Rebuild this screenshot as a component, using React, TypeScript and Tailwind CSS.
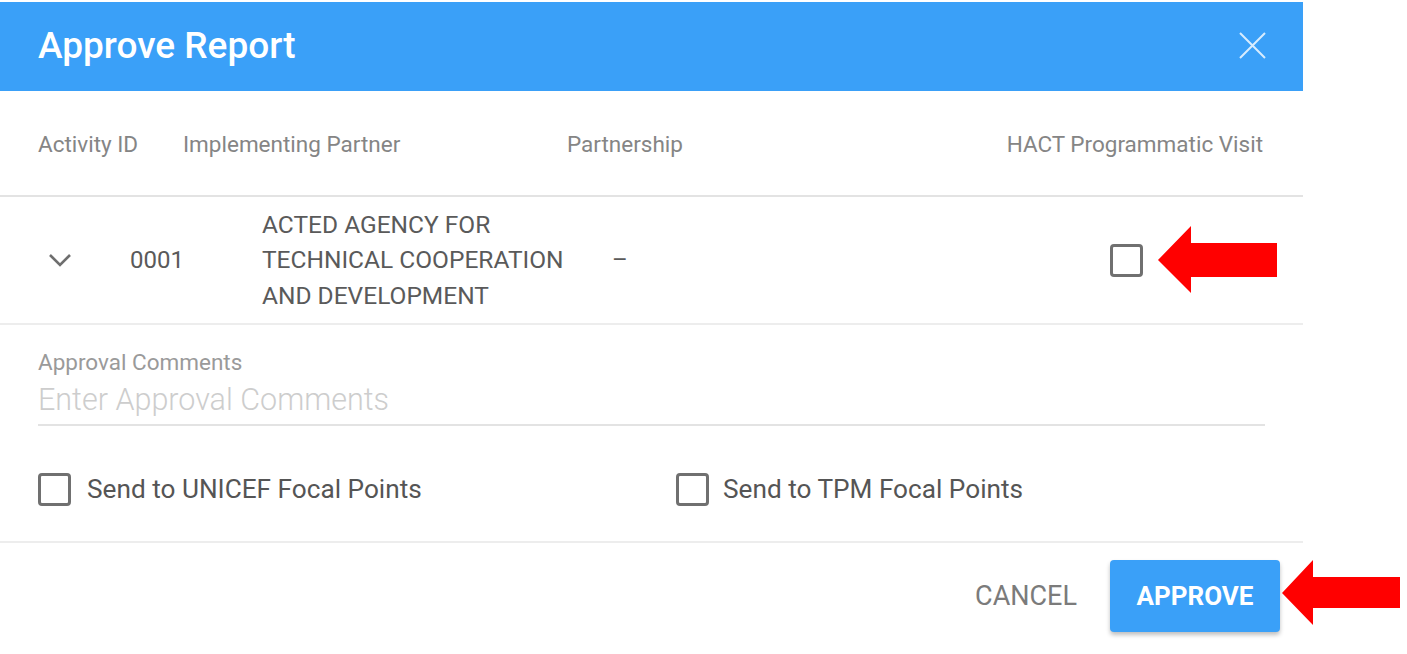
import React from "react";

function Checkbox() {
  return <div className="w-[33px] h-[33px] shrink-0 rounded-[4px] border-[3px] border-[#707070] bg-white" />;
}

export default function App() {
  return (
    <div className="relative w-[1407px] h-[654px] bg-white overflow-hidden" style={{ fontFamily: "Roboto, 'Noto Sans', sans-serif" }}>
      <div className="w-[1303px] pt-[2px]">
        {/* Header */}
        <div className="h-[89px] bg-[#3aa0f8] flex items-center justify-between pl-[38px] pr-[37px]">
          <div className="text-white text-[37px] font-medium leading-none -mt-[3px]">Approve Report</div>
          <svg width="27" height="27" viewBox="0 0 27 27" className="-mt-[3px]">
            <path d="M1 1 L26 26 M26 1 L1 26" stroke="rgba(255,255,255,0.8)" strokeWidth="2" fill="none" />
          </svg>
        </div>

        {/* Column headers */}
        <div className="h-[106px] pt-[3px] flex items-center pl-[38px] pr-[40px] text-[22.5px] text-[#858585] border-b-2 border-[#e3e3e3]">
          <div className="w-[145px]">Activity ID</div>
          <div className="w-[384px]">Implementing Partner</div>
          <div className="flex-1">Partnership</div>
          <div>HACT Programmatic Visit</div>
        </div>

        {/* Row */}
        <div className="h-[128px] flex items-center border-b-2 border-[#ededed] text-[#5a5a5a]">
          <div className="w-[130px] pl-[48px]">
            <svg width="24" height="14" viewBox="0 0 24 14">
              <path d="M2 2 L12 12 L22 2" stroke="#6e6e6e" strokeWidth="2.6" fill="none" />
            </svg>
          </div>
          <div className="w-[132px] text-[24px]">0001</div>
          <div className="w-[350px] text-[24.5px] leading-[35.5px] uppercase">
            <div>ACTED AGENCY FOR</div>
            <div>TECHNICAL COOPERATION</div>
            <div>AND DEVELOPMENT</div>
          </div>
          <div className="flex-1 text-[24px]">–</div>
          <div className="pr-[160px]">
            <Checkbox />
          </div>
        </div>

        {/* Comments */}
        <div className="pl-[38px] pr-[38px] pt-[24px]">
          <div className="text-[22.5px] leading-[26px] text-[#9a9a9a]">Approval Comments</div>
          <div className="mt-[7px] pb-[6px] border-b-2 border-[#e3e3e3] text-[30.5px] leading-[36px] font-light text-[#cdcdcd]">
            Enter Approval Comments
          </div>
        </div>

        {/* Options */}
        <div className="pt-[47px] pb-[35px] pl-[38px] flex items-center border-b-2 border-[#ededed] text-[26.2px] text-[#555555]">
          <div className="w-[638px] flex items-center gap-[16px]">
            <Checkbox />
            <span className="leading-[33px]">Send to UNICEF Focal Points</span>
          </div>
          <div className="flex items-center gap-[14px]">
            <Checkbox />
            <span className="leading-[33px]">Send to TPM Focal Points</span>
          </div>
        </div>

        {/* Footer */}
        <div className="pt-[17px] pr-[23px] flex justify-end items-center gap-[33px]">
          <div className="text-[27px] text-[#7b7b7b]">CANCEL</div>
          <div className="w-[170px] h-[72px] rounded-[4px] bg-[#3aa0f8] flex items-center justify-center text-white text-[26px] font-bold shadow-[0_3px_4px_rgba(0,0,0,0.25)]">
            APPROVE
          </div>
        </div>
      </div>

      {/* Annotation arrows */}
      <svg className="absolute left-0 top-0 pointer-events-none" width="1407" height="654">
        <polygon points="1158,260 1191,226 1191,243 1277,243 1277,277 1191,277 1191,293" fill="#ff0000" />
        <polygon points="1282,593 1313,560 1313,577 1400,577 1400,608 1313,608 1313,625" fill="#ff0000" />
      </svg>
    </div>
  );
}
